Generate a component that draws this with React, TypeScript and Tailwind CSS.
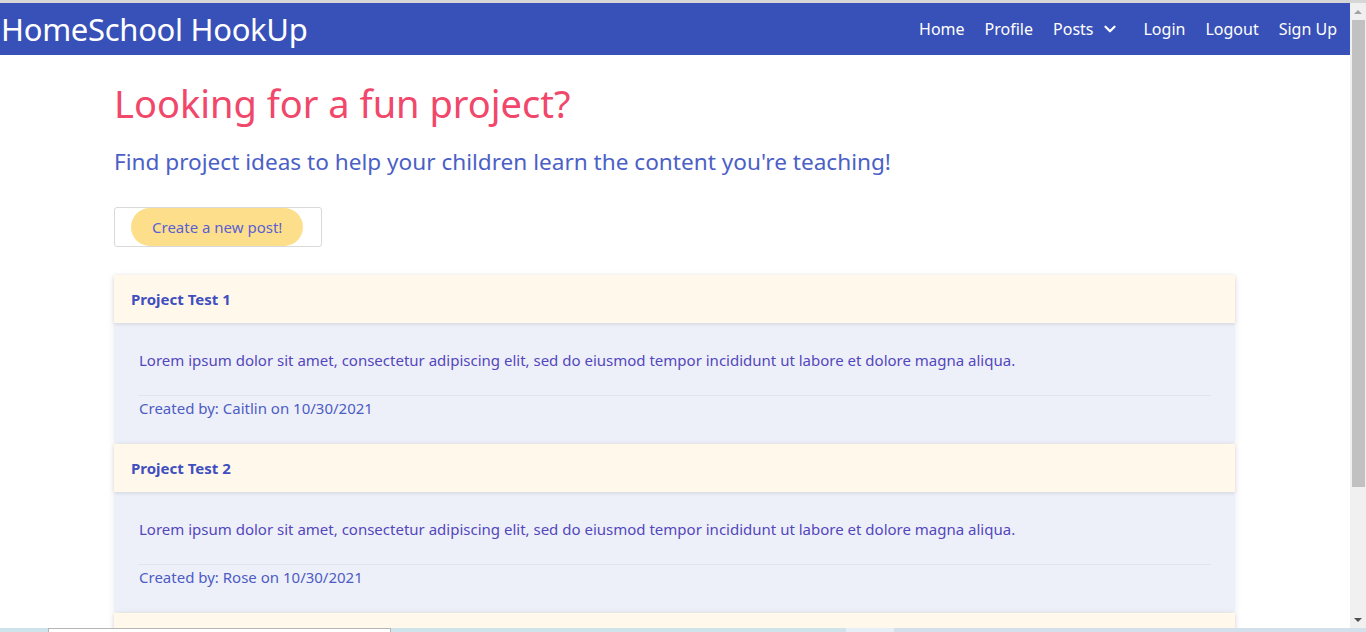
import { ChevronDown } from 'lucide-react';

type Post = {
  id: number;
  title: string;
  body: string;
  author: string;
  date: string;
};

const lorem =
  'Lorem ipsum dolor sit amet, consectetur adipiscing elit, sed do eiusmod tempor incididunt ut labore et dolore magna aliqua.';

const posts: Post[] = [
  { id: 1, title: 'Project Test 1', body: lorem, author: 'Caitlin', date: '10/30/2021' },
  { id: 2, title: 'Project Test 2', body: lorem, author: 'Rose', date: '10/30/2021' },
  { id: 3, title: 'Project Test 3', body: lorem, author: 'Caitlin', date: '10/30/2021' },
];

const navLinks = ['Home', 'Profile', 'Posts', 'Login', 'Logout', 'Sign Up'];

const font = "font-['Noto_Sans','Open_Sans',sans-serif]";

function Navbar() {
  return (
    <nav className="flex h-[52px] shrink-0 items-center justify-between bg-[#3851b8] pr-[13px] text-white">
      <a className="pl-[1px] text-[31px] leading-none tracking-[-0.3px]">HomeSchool HookUp</a>
      <ul className="flex items-center gap-[20px] text-[16px]">
        {navLinks.map((link) => (
          <li key={link} className="flex items-center">
            <span>{link}</span>
            {link === 'Posts' && <ChevronDown className="ml-[8px] mr-[4px] h-[18px] w-[18px]" strokeWidth={3} />}
          </li>
        ))}
      </ul>
    </nav>
  );
}

function PostCard({ post }: { post: Post }) {
  return (
    <div className="mb-[1px] shadow-[0_2px_8px_rgba(0,0,0,0.08)]">
      <div className="relative flex h-[48px] items-center bg-[#fff8eb] px-[17px] shadow-[0_1px_4px_rgba(0,0,0,0.12)]">
        <h5 className="text-[15px] font-bold text-[#3f4fc0]">{post.title}</h5>
      </div>
      <div className="bg-[#eef0f9] px-[24px] pb-[23px] pt-[25px] text-[15px] leading-6">
        <p className="mb-[23px] px-[1px] text-[#5247bd]">{post.body}</p>
        <hr className="border-[#e2e4ee]" />
        <p className="px-[1px] text-[#4c5cc4]">
          Created by: {post.author} on {post.date}
        </p>
      </div>
    </div>
  );
}

function Scrollbar() {
  return (
    <div className="flex w-[16px] shrink-0 flex-col items-center bg-[#f0f0f0]">
      <div className="flex h-[17px] items-center justify-center">
        <div className="h-0 w-0 border-x-[4px] border-b-[4px] border-x-transparent border-b-[#a3a3a3]" />
      </div>
      <div className="h-[467px] w-[13px] bg-[#c1c1c1]" />
      <div className="flex-1" />
      <div className="flex h-[17px] items-center justify-center">
        <div className="h-0 w-0 border-x-[4px] border-t-[4px] border-x-transparent border-t-[#505050]" />
      </div>
    </div>
  );
}

export default function App() {
  return (
    <div className={`${font} flex h-[632px] w-[1366px] flex-col overflow-hidden bg-white`}>
      <div className="h-[3px] shrink-0 bg-[#d6d6d6]" />
      <div className="flex min-h-0 flex-1">
        <div className="flex min-w-0 flex-1 flex-col overflow-hidden">
          <Navbar />
          <main className="mx-auto w-[1122px] pt-[22px]">
            <h1 className="text-[38px] leading-[52px] text-[#f0476a]">Looking for a fun project?</h1>
            <h2 className="mt-[18px] text-[22.6px] leading-[30px] text-[#4b5fc6]">
              Find project ideas to help your children learn the content you&apos;re teaching!
            </h2>
            <div className="mt-[30px] inline-flex h-[40px] w-[208px] items-start rounded-[3px] border border-[#d9d9d9] pl-[16px]">
              <button className="flex h-[38px] items-center rounded-full bg-[#fddf8b] px-[21px] text-[15px] text-[#5a5fd3]">
                Create a new post!
              </button>
            </div>
            <div className="mt-[28px] w-[1121px]">
              {posts.map((post) => (
                <PostCard key={post.id} post={post} />
              ))}
            </div>
          </main>
        </div>
        <Scrollbar />
      </div>
      <div className="flex h-[4px] shrink-0 bg-[#cfe3ea]">
        <div className="ml-[48px] w-[343px] border border-b-0 border-[#b5b5b5] bg-white" />
        <div className="ml-[455px] w-[48px] bg-[#e6eef6]" />
        <div className="flex-1 bg-[#d3e0ec]" />
      </div>
    </div>
  );
}
